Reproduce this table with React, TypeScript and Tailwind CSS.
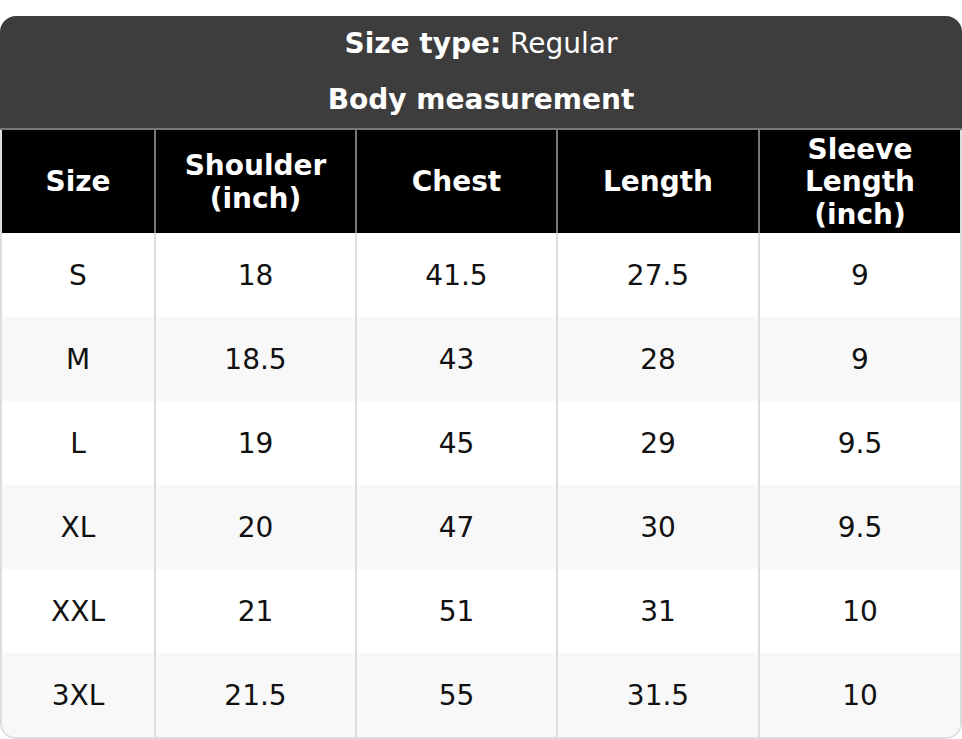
import React from "react";

const rows = [
  ["S", "18", "41.5", "27.5", "9"],
  ["M", "18.5", "43", "28", "9"],
  ["L", "19", "45", "29", "9.5"],
  ["XL", "20", "47", "30", "9.5"],
  ["XXL", "21", "51", "31", "10"],
  ["3XL", "21.5", "55", "31.5", "10"],
];

const headers = [["Size"], ["Shoulder", "(inch)"], ["Chest"], ["Length"], ["Sleeve", "Length", "(inch)"]];

export default function App() {
  return (
    <div className="bg-white pt-[16px] w-[962px]" style={{ fontFamily: '"DejaVu Sans", sans-serif' }}>
      <div className="rounded-t-[16px] bg-[#3d3d3d] text-white text-[28px] leading-[32.5px] text-center flex flex-col pt-[12px] pb-[12px] gap-[23px] border-b-2 border-[#777]">
        <div>
          <span className="font-bold">Size type:</span> Regular
        </div>
        <div className="font-bold">Body measurement</div>
      </div>
      <div className="border-x-2 border-b-2 border-[#ddd] rounded-b-[16px] overflow-hidden text-[28px] leading-[32.5px]">
        <div className="grid grid-cols-[152px_201px_201px_202px_1fr] h-[103px] bg-black text-white font-bold">
          {headers.map((h, i) => (
            <div
              key={i}
              className={
                "flex flex-col items-center justify-center text-center pt-[2px] " +
                (i > 0 ? "border-l-2 border-[#777]" : "")
              }
            >
              {h.map((l, j) => (
                <div key={j}>{l}</div>
              ))}
            </div>
          ))}
        </div>
        {rows.map((r, ri) => (
          <div
            key={ri}
            className={
              "grid grid-cols-[152px_201px_201px_202px_1fr] h-[84px] text-[#111] " +
              (ri % 2 === 1 ? "bg-[#f8f8f8]" : "bg-white")
            }
          >
            {r.map((c, ci) => (
              <div
                key={ci}
                className={"flex items-center justify-center pt-[2px] " + (ci > 0 ? "border-l-2 border-[#ddd]" : "")}
              >
                {c}
              </div>
            ))}
          </div>
        ))}
      </div>
    </div>
  );
}
